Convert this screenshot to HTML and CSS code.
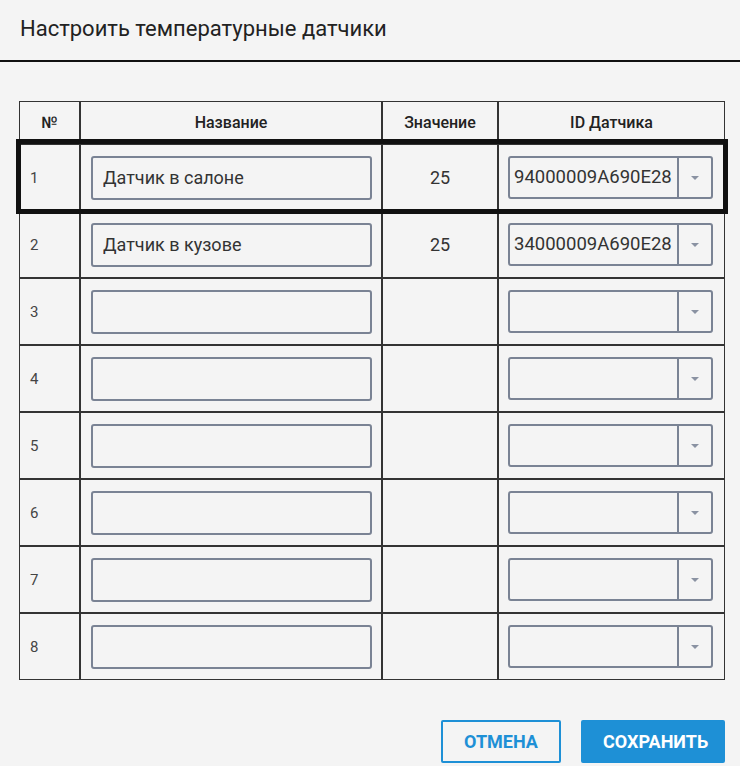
FILE: index.html
```html
<!DOCTYPE html>
<html lang="ru">
<head>
    <meta charset="UTF-8">
    <meta name="viewport" content="width=device-width, initial-scale=1.0">
    <title>Настроить температурные датчики</title>
    <link rel="stylesheet" href="styles.css">
</head>
<body>
    <div class="dialog-header">
        <h1>Настроить температурные датчики</h1>
    </div>
    <div class="dialog-body">
        <table class="sensors">
            <thead>
                <tr>
                    <th class="col-num">№</th>
                    <th class="col-name">Название</th>
                    <th class="col-value">Значение</th>
                    <th class="col-id">ID Датчика</th>
                </tr>
            </thead>
            <tbody>
                <tr class="selected">
                    <td class="num">1</td>
                    <td><input class="name-input" type="text" value="Датчик в салоне"></td>
                    <td class="value">25</td>
                    <td><div class="id-select"><span class="id-text">94000009A690E28</span><span class="id-arrow"></span></div></td>
                </tr>
                <tr>
                    <td class="num">2</td>
                    <td><input class="name-input" type="text" value="Датчик в кузове"></td>
                    <td class="value">25</td>
                    <td><div class="id-select"><span class="id-text">34000009A690E28</span><span class="id-arrow"></span></div></td>
                </tr>
                <tr>
                    <td class="num">3</td>
                    <td><input class="name-input" type="text" value=""></td>
                    <td class="value"></td>
                    <td><div class="id-select"><span class="id-text"></span><span class="id-arrow"></span></div></td>
                </tr>
                <tr>
                    <td class="num">4</td>
                    <td><input class="name-input" type="text" value=""></td>
                    <td class="value"></td>
                    <td><div class="id-select"><span class="id-text"></span><span class="id-arrow"></span></div></td>
                </tr>
                <tr>
                    <td class="num">5</td>
                    <td><input class="name-input" type="text" value=""></td>
                    <td class="value"></td>
                    <td><div class="id-select"><span class="id-text"></span><span class="id-arrow"></span></div></td>
                </tr>
                <tr>
                    <td class="num">6</td>
                    <td><input class="name-input" type="text" value=""></td>
                    <td class="value"></td>
                    <td><div class="id-select"><span class="id-text"></span><span class="id-arrow"></span></div></td>
                </tr>
                <tr>
                    <td class="num">7</td>
                    <td><input class="name-input" type="text" value=""></td>
                    <td class="value"></td>
                    <td><div class="id-select"><span class="id-text"></span><span class="id-arrow"></span></div></td>
                </tr>
                <tr>
                    <td class="num">8</td>
                    <td><input class="name-input" type="text" value=""></td>
                    <td class="value"></td>
                    <td><div class="id-select"><span class="id-text"></span><span class="id-arrow"></span></div></td>
                </tr>
            </tbody>
        </table>
    </div>
    <div class="dialog-footer">
        <button class="btn btn-outline">Отмена</button>
        <button class="btn btn-primary">Сохранить</button>
    </div>
</body>
</html>
```

FILE: styles.css
```css
body {
    font-family: Roboto, "Noto Sans", sans-serif;
    background-color: #f4f4f4;
    color: #333;
    margin: 0;
    padding: 0;
}
.dialog-header {
    border-bottom: 2px solid #111;
    padding: 0 20px;
    box-sizing: border-box;
    height: 62px;
}
.dialog-header h1 {
    margin: 0;
    font-size: 22px;
    font-weight: 400;
    line-height: 58px;
    color: #222;
}
.dialog-body {
    padding: 39px 15px 0 19px;
}
.sensors {
    width: 706px;
    border: 1px solid #333;
    border-collapse: separate;
    border-spacing: 0;
    table-layout: fixed;
}
.sensors th,
.sensors td {
    border-left: 2px solid #333;
    padding: 0;
}
.sensors th:first-child,
.sensors td:first-child {
    border-left: none;
}
.sensors td {
    border-top: 2px solid #333;
    height: 65px;
    vertical-align: middle;
}
.sensors th {
    height: 41px;
    font-size: 16px;
    font-weight: 500;
    color: #222;
    text-align: center;
}
.col-num { width: 59px; }
.col-name { width: 300px; }
.col-value { width: 114px; }
.sensors tr.selected {
    outline: 5px solid #111;
    outline-offset: -1px;
}
.num {
    padding-left: 10px !important;
    font-size: 15px;
    color: #444;
}
.value {
    text-align: center;
    font-size: 18px;
}
.name-input {
    display: block;
    box-sizing: border-box;
    width: 281px;
    height: 44px;
    margin-left: 10px;
    padding: 0 10px;
    border: 2px solid #7a8394;
    border-radius: 3px;
    background: transparent;
    font-family: Roboto, "Noto Sans", sans-serif;
    font-size: 18px;
    color: #333;
    outline: none;
}
.id-select {
    display: flex;
    box-sizing: border-box;
    width: 205px;
    height: 43px;
    margin-left: 9px;
    border: 2px solid #7a8394;
    border-radius: 3px;
}
.id-text {
    flex: 1;
    overflow: hidden;
    white-space: nowrap;
    padding-left: 4px;
    font-size: 18.5px;
    line-height: 39px;
    color: #333;
    border-right: 2px solid #7a8394;
}
.id-arrow {
    width: 32px;
    display: flex;
    align-items: center;
    justify-content: center;
}
.id-arrow::after {
    content: "";
    border-left: 4px solid transparent;
    border-right: 4px solid transparent;
    border-top: 4px solid #8a92a2;
}
.dialog-footer {
    display: flex;
    justify-content: flex-end;
    gap: 20px;
    padding: 40px 15px 0 0;
}
.btn {
    box-sizing: border-box;
    height: 43px;
    padding: 0 20px;
    border: 2px solid #1e90d6;
    border-radius: 2px;
    font-family: Roboto, "Noto Sans", sans-serif;
    font-size: 18px;
    font-weight: 700;
    text-transform: uppercase;
    cursor: pointer;
}
.btn-outline {
    background: transparent;
    color: #1e90d6;
    width: 120px;
}
.btn-primary {
    background: #1e90d6;
    color: #fff;
    width: 144px;
}
```
